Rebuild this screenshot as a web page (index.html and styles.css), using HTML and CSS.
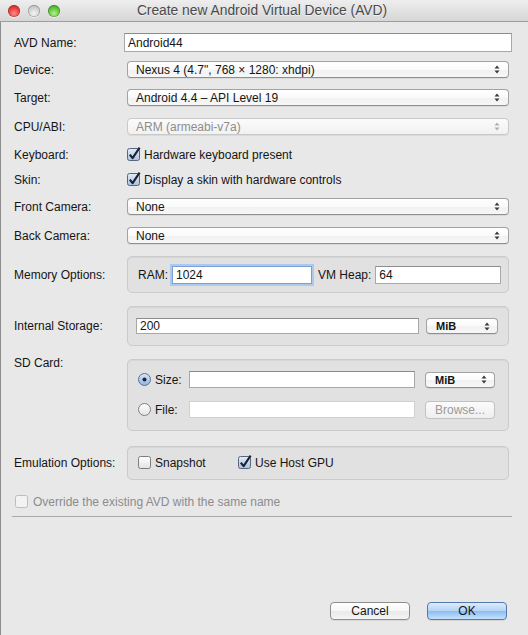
FILE: index.html
```html
<!DOCTYPE html>
<html>
<head>
<meta charset="utf-8">
<title>Create new Android Virtual Device (AVD)</title>
<link rel="stylesheet" href="styles.css">
</head>
<body>
<div class="window">
  <div class="titlebar">
    <div class="lights">
      <span class="light red"></span><span class="light gray"></span><span class="light green"></span>
    </div>
    <div class="title">Create new Android Virtual Device (AVD)</div>
    <div></div>
  </div>

  <div class="content">
    <div class="row row-name">
      <div class="label">AVD Name:</div>
      <div class="input wide">Android44</div>
    </div>

    <div class="row row-device">
      <div class="label">Device:</div>
      <div class="select">
        <span>Nexus 4 (4.7", 768 × 1280: xhdpi)</span>
        <svg class="arrows" width="6" height="9" viewBox="0 0 6 9"><path d="M0.5 3.6 L3 0.6 L5.5 3.6 Z M0.5 5.4 L3 8.4 L5.5 5.4 Z" fill="#3a3a3a"/></svg>
      </div>
    </div>

    <div class="row row-target">
      <div class="label">Target:</div>
      <div class="select">
        <span>Android 4.4 – API Level 19</span>
        <svg class="arrows" width="6" height="9" viewBox="0 0 6 9"><path d="M0.5 3.6 L3 0.6 L5.5 3.6 Z M0.5 5.4 L3 8.4 L5.5 5.4 Z" fill="#3a3a3a"/></svg>
      </div>
    </div>

    <div class="row row-cpu">
      <div class="label">CPU/ABI:</div>
      <div class="select disabled">
        <span>ARM (armeabi-v7a)</span>
        <svg class="arrows" width="6" height="9" viewBox="0 0 6 9"><path d="M0.5 3.6 L3 0.6 L5.5 3.6 Z M0.5 5.4 L3 8.4 L5.5 5.4 Z" fill="#b0b0b0"/></svg>
      </div>
    </div>

    <div class="row row-keyboard">
      <div class="label">Keyboard:</div>
      <div class="check-line ml3">
        <svg class="check" width="14" height="14" viewBox="0 0 14 14"><defs><linearGradient id="cb1" x1="0" y1="0" x2="0" y2="1"><stop offset="0" stop-color="#e4ecf7"/><stop offset="1" stop-color="#a9c1e0"/></linearGradient></defs><rect x="0.5" y="1.5" width="12" height="12" rx="2" fill="url(#cb1)" stroke="#55667e"/><path d="M2.8 7.6 L5.6 11.2 L12.6 0.6" fill="none" stroke="#1b2230" stroke-width="2.1" stroke-linejoin="round"/></svg>
        <span>Hardware keyboard present</span>
      </div>
    </div>

    <div class="row row-skin">
      <div class="label">Skin:</div>
      <div class="check-line ml3">
        <svg class="check" width="14" height="14" viewBox="0 0 14 14"><defs><linearGradient id="cb2" x1="0" y1="0" x2="0" y2="1"><stop offset="0" stop-color="#e4ecf7"/><stop offset="1" stop-color="#a9c1e0"/></linearGradient></defs><rect x="0.5" y="1.5" width="12" height="12" rx="2" fill="url(#cb2)" stroke="#55667e"/><path d="M2.8 7.6 L5.6 11.2 L12.6 0.6" fill="none" stroke="#1b2230" stroke-width="2.1" stroke-linejoin="round"/></svg>
        <span>Display a skin with hardware controls</span>
      </div>
    </div>

    <div class="row row-front">
      <div class="label">Front Camera:</div>
      <div class="select">
        <span>None</span>
        <svg class="arrows" width="6" height="9" viewBox="0 0 6 9"><path d="M0.5 3.6 L3 0.6 L5.5 3.6 Z M0.5 5.4 L3 8.4 L5.5 5.4 Z" fill="#3a3a3a"/></svg>
      </div>
    </div>

    <div class="row row-back">
      <div class="label">Back Camera:</div>
      <div class="select">
        <span>None</span>
        <svg class="arrows" width="6" height="9" viewBox="0 0 6 9"><path d="M0.5 3.6 L3 0.6 L5.5 3.6 Z M0.5 5.4 L3 8.4 L5.5 5.4 Z" fill="#3a3a3a"/></svg>
      </div>
    </div>

    <div class="row row-memory">
      <div class="label">Memory Options:</div>
      <div class="group group-memory">
        <span class="inner-label">RAM:</span>
        <div class="input ram focus">1024</div>
        <span class="inner-label heap-label">VM Heap:</span>
        <div class="input heap">64</div>
      </div>
    </div>

    <div class="row row-internal">
      <div class="label">Internal Storage:</div>
      <div class="group group-internal">
        <div class="input storage">200</div>
        <div class="select small">
          <span>MiB</span>
          <svg class="arrows" width="6" height="9" viewBox="0 0 6 9"><path d="M0.5 3.6 L3 0.6 L5.5 3.6 Z M0.5 5.4 L3 8.4 L5.5 5.4 Z" fill="#3a3a3a"/></svg>
        </div>
      </div>
    </div>

    <div class="row row-sd">
      <div class="label top">SD Card:</div>
      <div class="group group-sd">
        <div class="sd-line">
          <div class="radio-line">
            <svg width="13" height="13" viewBox="0 0 13 13"><defs><linearGradient id="rb1" x1="0" y1="0" x2="0" y2="1"><stop offset="0" stop-color="#dbe7f6"/><stop offset="1" stop-color="#8fb3e2"/></linearGradient></defs><circle cx="6.5" cy="6.5" r="6" fill="url(#rb1)" stroke="#5a7196"/><circle cx="6.5" cy="6.5" r="2" fill="#1d2636"/></svg>
            <span>Size:</span>
          </div>
          <div class="input sd-input"></div>
          <div class="select small sd-select">
            <span>MiB</span>
            <svg class="arrows" width="6" height="9" viewBox="0 0 6 9"><path d="M0.5 3.6 L3 0.6 L5.5 3.6 Z M0.5 5.4 L3 8.4 L5.5 5.4 Z" fill="#3a3a3a"/></svg>
          </div>
        </div>
        <div class="sd-line">
          <div class="radio-line">
            <svg width="13" height="13" viewBox="0 0 13 13"><defs><linearGradient id="rb2" x1="0" y1="0" x2="0" y2="1"><stop offset="0" stop-color="#ffffff"/><stop offset="1" stop-color="#e3e3e3"/></linearGradient></defs><circle cx="6.5" cy="6.5" r="6" fill="url(#rb2)" stroke="#7f7f7f"/></svg>
            <span>File:</span>
          </div>
          <div class="input sd-input disabled"></div>
          <div class="btn browse">Browse...</div>
        </div>
      </div>
    </div>

    <div class="row row-emulation">
      <div class="label">Emulation Options:</div>
      <div class="group group-emulation">
        <div class="check-line snapshot">
          <svg class="check" width="14" height="14" viewBox="0 0 14 14"><defs><linearGradient id="cb3" x1="0" y1="0" x2="0" y2="1"><stop offset="0" stop-color="#ffffff"/><stop offset="1" stop-color="#e2e2e2"/></linearGradient></defs><rect x="0.5" y="1.5" width="12" height="12" rx="2" fill="url(#cb3)" stroke="#7c7c7c"/></svg>
          <span>Snapshot</span>
        </div>
        <div class="check-line">
          <svg class="check" width="14" height="14" viewBox="0 0 14 14"><defs><linearGradient id="cb4" x1="0" y1="0" x2="0" y2="1"><stop offset="0" stop-color="#e4ecf7"/><stop offset="1" stop-color="#a9c1e0"/></linearGradient></defs><rect x="0.5" y="1.5" width="12" height="12" rx="2" fill="url(#cb4)" stroke="#55667e"/><path d="M2.8 7.6 L5.6 11.2 L12.6 0.6" fill="none" stroke="#1b2230" stroke-width="2.1" stroke-linejoin="round"/></svg>
          <span>Use Host GPU</span>
        </div>
      </div>
    </div>

    <div class="row-override check-line disabled">
      <svg class="check" width="14" height="14" viewBox="0 0 14 14"><rect x="0.5" y="1.5" width="12" height="12" rx="2" fill="#f3f3f3" stroke="#bdbdbd"/></svg>
      <span>Override the existing AVD with the same name</span>
    </div>

    <div class="separator"></div>

    <div class="footer">
      <div class="btn">Cancel</div>
      <div class="btn primary">OK</div>
    </div>
  </div>
</div>
</body>
</html>
```

FILE: styles.css
```css
* { box-sizing: border-box; }
html, body { margin: 0; padding: 0; }
body {
  font-family: "Liberation Sans", Arial, sans-serif;
  font-size: 12px;
  color: #151515;
  background: #e8e8e8;
}
.window {
  width: 528px;
  height: 635px;
  background: #e8e8e8;
  display: flex;
  flex-direction: column;
  overflow: hidden;
}
.titlebar {
  height: 22px;
  flex: 0 0 22px;
  display: grid;
  grid-template-columns: 1fr auto 1fr;
  align-items: center;
  background: linear-gradient(#eeeeee, #d6d6d6);
  border-bottom: 1px solid #9d9d9d;
}
.lights { display: flex; gap: 8px; padding-left: 8px; align-items: center; }
.light {
  width: 12px; height: 12px; border-radius: 50%;
  box-shadow: inset 0 0 0 0.5px rgba(0,0,0,0.35), 0 1px 0 rgba(255,255,255,0.6);
}
.light.red { background: radial-gradient(circle at 50% 70%, #ff8a8a 0%, #e83a3a 55%, #b51e1e 100%); }
.light.gray { background: radial-gradient(circle at 50% 70%, #f4f4f4 0%, #cfcfcf 55%, #a5a5a5 100%); }
.light.green { background: radial-gradient(circle at 50% 70%, #b4f08a 0%, #5cc23a 55%, #2f8a1d 100%); }
.title {
  font-size: 13.8px;
  color: #4a4a4a;
  text-shadow: 0 1px 0 rgba(255,255,255,0.6);
  margin-left: -4px;
}

.content {
  flex: 1;
  display: flex;
  flex-direction: column;
  padding: 11px 16px 15px 13px;
  border-left: 1px solid #8d8d8d;
}
.row {
  display: grid;
  grid-template-columns: 110px 1fr;
  align-items: center;
}
.label { white-space: nowrap; }
.label.top { align-self: start; margin-top: -3px; }

.row-name { height: 19px; }
.row-device { margin-top: 9px; height: 17px; }
.row-target { margin-top: 11px; height: 17px; }
.row-cpu { margin-top: 12px; height: 17px; }
.row-keyboard { margin-top: 13px; height: 14px; }
.row-skin { margin-top: 11px; height: 14px; }
.row-front { margin-top: 11px; height: 17px; }
.row-back { margin-top: 12px; height: 17px; }
.row-memory { margin-top: 12px; height: 37px; }
.row-internal { margin-top: 13px; height: 40px; }
.row-sd { margin-top: 13px; height: 72px; }
.row-emulation { margin-top: 15px; height: 34px; }

.input {
  height: 19px;
  background: #ffffff;
  border: 1px solid #a8a8a8;
  border-top-color: #8c8c8c;
  padding: 0 3px;
  display: flex;
  align-items: center;
  white-space: nowrap;
}
.input.disabled { border-color: #d0d0d0; }

.select {
  height: 17px;
  margin: 0 3px;
  border: 1px solid #a2a2a2;
  border-bottom-color: #8e8e8e;
  border-radius: 4px;
  background: linear-gradient(#ffffff, #fafafa 50%, #f1f1f1 51%, #f7f7f7);
  box-shadow: 0 1px 0 rgba(0,0,0,0.06);
  display: flex;
  align-items: center;
  justify-content: space-between;
  padding: 0 8px 0 8px;
  white-space: nowrap;
}
.select.disabled { color: #8d8d8d; border-color: #c9c9c9; background: linear-gradient(#fbfbfb, #f1f1f1); }
.select.small {
  margin: 0;
  font-size: 11px;
  font-weight: bold;
  padding: 0 7px 0 9px;
  height: 16px;
}
.arrows { display: block; flex: 0 0 auto; }

.check-line { display: flex; align-items: center; gap: 3px; white-space: nowrap; }
.check-line .check { display: block; margin-top: -2px; }
.ml3 { margin-left: 3px; }

.group {
  height: 100%;
  margin: 0 3px;
  background: #e1e1e1;
  border: 1px solid #cbcbcb;
  border-radius: 5px;
  box-shadow: inset 0 1px 1px rgba(0,0,0,0.05);
}
.group-memory {
  display: flex;
  align-items: center;
  padding: 0 7px 0 10px;
}
.inner-label { white-space: nowrap; }
.input.ram { width: 140px; height: 18px; margin-left: 4px; }
.input.focus {
  border-color: #7aa0d4;
  box-shadow: 0 0 0 2px #adc9ee;
}
.heap-label { margin-left: 6px; }
.input.heap { flex: 1; height: 18px; margin-left: 4px; }

.group-internal {
  display: flex;
  align-items: center;
  gap: 7px;
  padding: 0 10px 0 8px;
}
.input.storage { flex: 1; height: 16px; }
.group-internal .select.small { width: 72px; }

.group-sd {
  display: flex;
  flex-direction: column;
  gap: 13px;
  padding: 11px 13px 0 10px;
}
.sd-line { display: flex; align-items: center; height: 17px; }
.radio-line { width: 51px; display: flex; align-items: center; gap: 4px; }
.radio-line svg { display: block; }
.input.sd-input { flex: 1; height: 17px; }
.select.small.sd-select { width: 70px; margin-left: 10px; }

.btn {
  width: 80px;
  height: 18px;
  border: 1px solid #8e8e8e;
  border-radius: 4px;
  background: linear-gradient(#ffffff, #f6f6f6 50%, #e9e9e9 51%, #f4f4f4);
  box-shadow: 0 1px 0 rgba(0,0,0,0.08);
  display: flex;
  align-items: center;
  justify-content: center;
}
.btn.browse {
  width: 70px;
  margin-left: 10px;
  color: #9a9a9a;
  border-color: #c2c2c2;
  background: linear-gradient(#fbfbfb, #efefef);
  box-shadow: none;
}
.btn.primary {
  border-color: #5579ac;
  background: linear-gradient(#dcecfc, #b3d3f6 50%, #8cbcef 51%, #c4e2fd);
}

.group-emulation {
  display: flex;
  align-items: center;
  padding: 0 10px;
}
.snapshot { width: 100px; }

.row-override {
  margin-top: 15px;
  height: 14px;
  margin-left: 1px;
  gap: 4px;
}
.row-override.disabled { color: #8c8c8c; }

.separator {
  margin-top: 7px;
  margin-left: -2px;
  height: 1px;
  background: #a9a9a9;
}

.footer {
  margin-top: auto;
  display: flex;
  justify-content: flex-end;
  gap: 17px;
  margin-right: 5px;
}
```
